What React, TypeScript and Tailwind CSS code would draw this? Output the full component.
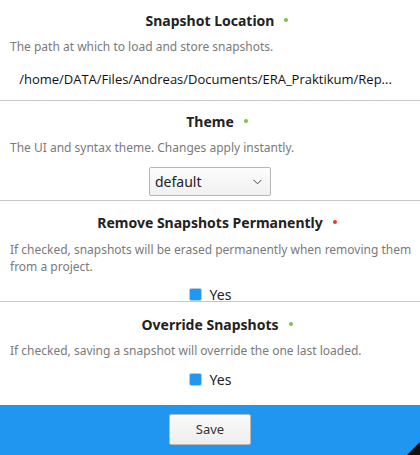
import React from "react";

const font = { fontFamily: '"Noto Sans", "Open Sans", sans-serif' };

function Title({ text, dot }: { text: string; dot: "green" | "red" }) {
  return (
    <div className="flex h-[20px] items-center justify-center text-[14px] font-bold text-[#222]">
      <span className="relative">
        {text}
        <span
          className={
            "absolute right-[-14px] top-[8px] h-[4px] w-[4px] rounded-full " +
            (dot === "green" ? "bg-[#7cc24a]" : "bg-[#e8392f]")
          }
        />
      </span>
    </div>
  );
}

function Desc({ children }: { children: React.ReactNode }) {
  return <div className="pl-[10px] pr-[4px] text-[12px] leading-[17px] text-[#7a7a7a]">{children}</div>;
}

function Check() {
  return (
    <div className="flex items-center justify-center gap-[8px]">
      <span className="flex h-[13px] w-[13px] items-center justify-center rounded-[2px] border border-[#a9cdee] bg-white">
        <span className="h-[11px] w-[11px] rounded-[1px] bg-[#2196f3]" />
      </span>
      <span className="text-[14px] text-[#222]">Yes</span>
    </div>
  );
}

export default function App() {
  return (
    <div className="flex h-[455px] w-[420px] flex-col overflow-hidden bg-white" style={font}>
      <section className="flex h-[101px] shrink-0 flex-col border-b border-[#c6c6c6] pt-[10px]">
        <Title text="Snapshot Location" dot="green" />
        <div className="mt-[8px]">
          <Desc>The path at which to load and store snapshots.</Desc>
        </div>
        <div
          className="mt-[15px] pr-[9px] text-center text-[13px] text-[#111]"
          style={{ fontFamily: '"Open Sans", "Noto Sans", sans-serif' }}
        >
          /home/DATA/Files/Andreas/Documents/ERA_Praktikum/Rep...
        </div>
      </section>
      <section className="flex h-[100px] shrink-0 flex-col border-b border-[#c6c6c6] pt-[10px]">
        <Title text="Theme" dot="green" />
        <div className="mt-[8px]">
          <Desc>The UI and syntax theme. Changes apply instantly.</Desc>
        </div>
        <div className="mt-[11px] flex justify-center">
          <div className="flex h-[29px] w-[122px] items-center justify-between rounded-[2px] border border-[#b5b5b5] bg-gradient-to-b from-[#fdfdfd] to-[#f0f0f0] pl-[5px] pr-[8px] text-[14px] text-[#222]">
            <span>default</span>
            <svg width="9" height="6" viewBox="0 0 9 6" fill="none">
              <path d="M0.5 0.8 L4.5 4.8 L8.5 0.8" stroke="#444" strokeWidth="1" />
            </svg>
          </div>
        </div>
      </section>
      <section className="flex h-[101px] shrink-0 flex-col overflow-hidden border-b border-[#c6c6c6] pt-[11px]">
        <Title text="Remove Snapshots Permanently" dot="red" />
        <div className="mt-[9px]">
          <Desc>
            If checked, snapshots will be erased permanently when removing them from a project.
          </Desc>
        </div>
        <div className="mt-[9px]">
          <Check />
        </div>
      </section>
      <section className="flex h-[103px] shrink-0 flex-col pt-[12px]">
        <Title text="Override Snapshots" dot="green" />
        <div className="mt-[8px]">
          <Desc>If checked, saving a snapshot will override the one last loaded.</Desc>
        </div>
        <div className="mt-[10px]">
          <Check />
        </div>
      </section>
      <footer className="relative flex flex-1 items-start justify-center bg-[#2196f0] pt-[9px]">
        <button className="h-[31px] w-[82px] rounded-[2px] border border-[#b9b9b9] bg-gradient-to-b from-[#fafafa] to-[#eeeeee] text-[13px] text-[#333]">
          Save
        </button>
        <svg className="absolute bottom-0 right-0" width="13" height="13" viewBox="0 0 13 13">
          <polygon points="13,0 13,13 0,13" fill="#111" />
        </svg>
      </footer>
    </div>
  );
}
